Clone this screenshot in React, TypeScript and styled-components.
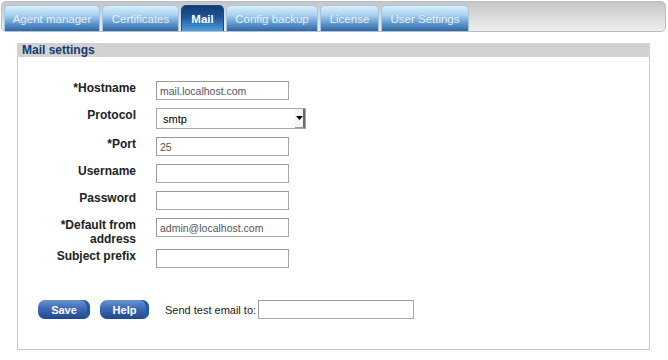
import React from "react";
import styled, { createGlobalStyle } from "styled-components";

const Global = createGlobalStyle`
  html, body { margin: 0; padding: 0; background: #fff; }
  body { font-family: "Liberation Sans", Arial, sans-serif; }
`;

const Page = styled.div`
  width: 668px;
  height: 360px;
  padding: 1px 0 0 1px;
  box-sizing: border-box;
`;

const TabBar = styled.div`
  width: 665px;
  height: 31px;
  box-sizing: border-box;
  border: 1px solid #bdbdbd;
  border-radius: 5px;
  background: linear-gradient(#c6c6c6, #eeeeee);
  display: flex;
  align-items: flex-end;
  gap: 2px;
  padding: 0 0 0 2px;
`;

const Tab = styled.div<{ $active?: boolean; $w: number }>`
  width: ${(p) => p.$w}px;
  height: 26px;
  box-sizing: border-box;
  border-radius: 5px 5px 0 0;
  border: 1px solid ${(p) => (p.$active ? "#174a86" : "#a4c6e4")};
  border-bottom: none;
  background: ${(p) =>
    p.$active
      ? "linear-gradient(#103d78 0%, #1d5596 45%, #4f9fe0 100%)"
      : "linear-gradient(#d8eefb 0%, #acd3f0 35%, #5f98cf 70%, #2d68a8 100%)"};
  color: ${(p) => (p.$active ? "#ffffff" : "#e6eff9")};
  font-size: 11.5px;
  font-weight: ${(p) => (p.$active ? "bold" : "normal")};
  display: flex;
  align-items: center;
  justify-content: center;
  padding-top: 1px;
`;

const Panel = styled.div`
  margin: 11px 0 0 16px;
  width: 633px;
  height: 307px;
  box-sizing: border-box;
  border: 1px solid #c8c8c8;
  border-top: none;
`;

const PanelHeader = styled.div`
  height: 14px;
  background: #d2d2d2;
  margin: 0 -1px;
  padding-left: 5px;
  font-size: 12px;
  font-weight: bold;
  color: #123a75;
  line-height: 14px;
`;

const Form = styled.div`
  display: grid;
  grid-template-columns: 118px 133px;
  column-gap: 20px;
  row-gap: 8px;
  padding: 24px 0 0 0;
  align-items: start;
`;

const Label = styled.div<{ $tight?: boolean }>`
  text-align: right;
  font-size: 12px;
  font-weight: bold;
  color: #222;
  line-height: 14px;
  margin-bottom: ${(p) => (p.$tight ? "-5px" : "0")};
`;

const Input = styled.input`
  width: 133px;
  height: 19px;
  box-sizing: border-box;
  border: 1px solid #a8a8a8;
  border-top-color: #9a9a9a;
  border-left-color: #9a9a9a;
  padding: 0 3px;
  font-family: "Liberation Sans", Arial, sans-serif;
  font-size: 10.5px;
  color: #555;
  outline: none;
  margin: 0;
`;

const SelectWrap = styled.div`
  position: relative;
  width: 150px;
  height: 21px;
`;

const Select = styled.select`
  appearance: none;
  width: 150px;
  height: 21px;
  box-sizing: border-box;
  border: 1px solid #a8a8a8;
  background: #fff;
  padding: 0 0 0 6px;
  font-family: "Liberation Sans", Arial, sans-serif;
  font-size: 11px;
  color: #000;
  margin: 0;
  outline: none;
`;

const Arrow = styled.div`
  position: absolute;
  right: 1px;
  top: 1px;
  width: 10px;
  height: 19px;
  box-sizing: border-box;
  background: #f4f4f4;
  border-right: 2px solid #6a6a6a;
  border-bottom: 1px solid #999;
  display: flex;
  align-items: center;
  justify-content: center;
  pointer-events: none;
`;

const Footer = styled.div`
  display: flex;
  align-items: center;
  padding: 32px 0 0 20px;
`;

const Button = styled.button<{ $w: number; $mr: number }>`
  width: ${(p) => p.$w}px;
  height: 19px;
  margin-right: ${(p) => p.$mr}px;
  border: none;
  border-radius: 7px;
  background: linear-gradient(#6a95d0 0%, #3e6ab2 45%, #21468e 100%);
  box-shadow: inset -3px 0 0 #1f5aa8;
  color: #fff;
  font-family: "Liberation Sans", Arial, sans-serif;
  font-size: 11px;
  font-weight: bold;
  padding: 0;
`;

const TestLabel = styled.span`
  font-size: 11px;
  color: #222;
  margin-right: 2px;
`;

const TestInput = styled(Input)`
  width: 156px;
`;

const tabs: { name: string; w: number; active?: boolean }[] = [
  { name: "Agent manager", w: 96 },
  { name: "Certificates", w: 77 },
  { name: "Mail", w: 43, active: true },
  { name: "Config backup", w: 92 },
  { name: "License", w: 59 },
  { name: "User Settings", w: 88 },
];

export default function App() {
  return (
    <Page>
      <Global />
      <TabBar>
        {tabs.map((t) => (
          <Tab key={t.name} $w={t.w} $active={t.active}>
            {t.name}
          </Tab>
        ))}
      </TabBar>
      <Panel>
        <PanelHeader>Mail settings</PanelHeader>
        <Form>
          <Label>*Hostname</Label>
          <Input defaultValue="mail.localhost.com" />
          <Label>Protocol</Label>
          <SelectWrap>
            <Select defaultValue="smtp">
              <option value="smtp">smtp</option>
            </Select>
            <Arrow>
              <svg width="7" height="4" viewBox="0 0 7 4">
                <path d="M0 0h7L3.5 4z" fill="#000" />
              </svg>
            </Arrow>
          </SelectWrap>
          <Label>*Port</Label>
          <Input defaultValue="25" />
          <Label>Username</Label>
          <Input />
          <Label>Password</Label>
          <Input type="password" />
          <Label $tight>
            *Default from
            <br />
            address
          </Label>
          <Input defaultValue="admin@localhost.com" />
          <Label>Subject prefix</Label>
          <Input />
        </Form>
        <Footer>
          <Button $w={52} $mr={10}>Save</Button>
          <Button $w={49} $mr={16}>Help</Button>
          <TestLabel>Send test email to:</TestLabel>
          <TestInput />
        </Footer>
      </Panel>
    </Page>
  );
}
